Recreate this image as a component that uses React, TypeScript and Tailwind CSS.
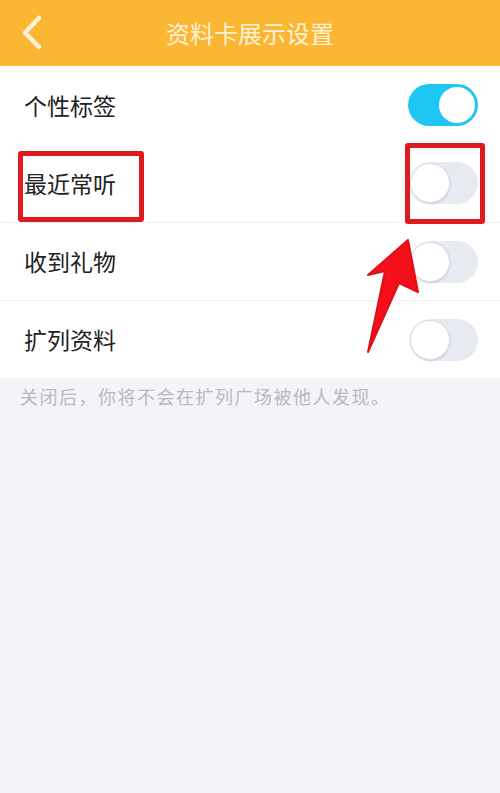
import React from 'react';

const rows = [
  { label: '个性标签', on: true },
  { label: '最近常听', on: false },
  { label: '收到礼物', on: false },
  { label: '扩列资料', on: false },
];

function Toggle({ on }: { on: boolean }) {
  return on ? (
    <div className="w-[70px] h-[42px] rounded-full bg-[#1fc6f3] flex items-center justify-end p-[3px]">
      <div className="w-[36px] h-[36px] rounded-full bg-white" />
    </div>
  ) : (
    <div className="w-[68px] h-[42px] rounded-full bg-[#e7eaf1] flex items-center justify-start">
      <div className="w-[40px] h-[40px] rounded-full bg-white border border-[#dcdde2] shadow-sm" />
    </div>
  );
}

export default function App() {
  return (
    <div
      className="relative w-[500px] h-[793px] bg-[#f3f4f8] overflow-hidden"
      style={{ fontFamily: '"Noto Sans CJK SC", "Noto Sans", sans-serif' }}
    >
      <div className="relative h-[66px] bg-[#fbb633] flex items-center justify-center">
        <svg className="absolute left-[18px] top-[12px]" width="30" height="42" viewBox="0 0 30 42">
          <path d="M21 6 L7 20.5 L21 35" fill="none" stroke="#fdf3dc" strokeWidth="4.5" strokeLinecap="round" strokeLinejoin="round" />
        </svg>
        <span className="text-[24px] text-[#fdf1d6]">资料卡展示设置</span>
      </div>

      <div className="bg-white">
        {rows.map((r, i) => (
          <div
            key={r.label}
            className={`h-[78px] flex items-center justify-between pl-[24px] pr-[22px] ${i > 1 ? 'border-t border-[#efeff2]' : ''}`}
          >
            <span className="text-[23px] text-[#222222]">{r.label}</span>
            <Toggle on={r.on} />
          </div>
        ))}
      </div>

      <div className="pl-[20px] pt-[5px] text-[18px] text-[#b9b9bd] tracking-[1.5px]">
        关闭后，你将不会在扩列广场被他人发现。
      </div>

      {/* annotation overlay */}
      <div className="absolute left-[18px] top-[151px] w-[126px] h-[71px] border-[5px] border-[#e01b1f] rounded-[3px]" />
      <div className="absolute left-[405px] top-[143px] w-[80px] h-[81px] border-[5px] border-[#e01b1f] rounded-[3px]" />
      <svg className="absolute left-0 top-0" width="500" height="793" viewBox="0 0 500 793">
        <path
          d="M408 240 L368 275 L385 271 L368 352 L399 283 L418 292 Z"
          fill="#f3101a"
          stroke="#e00f18"
          strokeWidth="2"
          strokeLinejoin="round"
        />
      </svg>
    </div>
  );
}
